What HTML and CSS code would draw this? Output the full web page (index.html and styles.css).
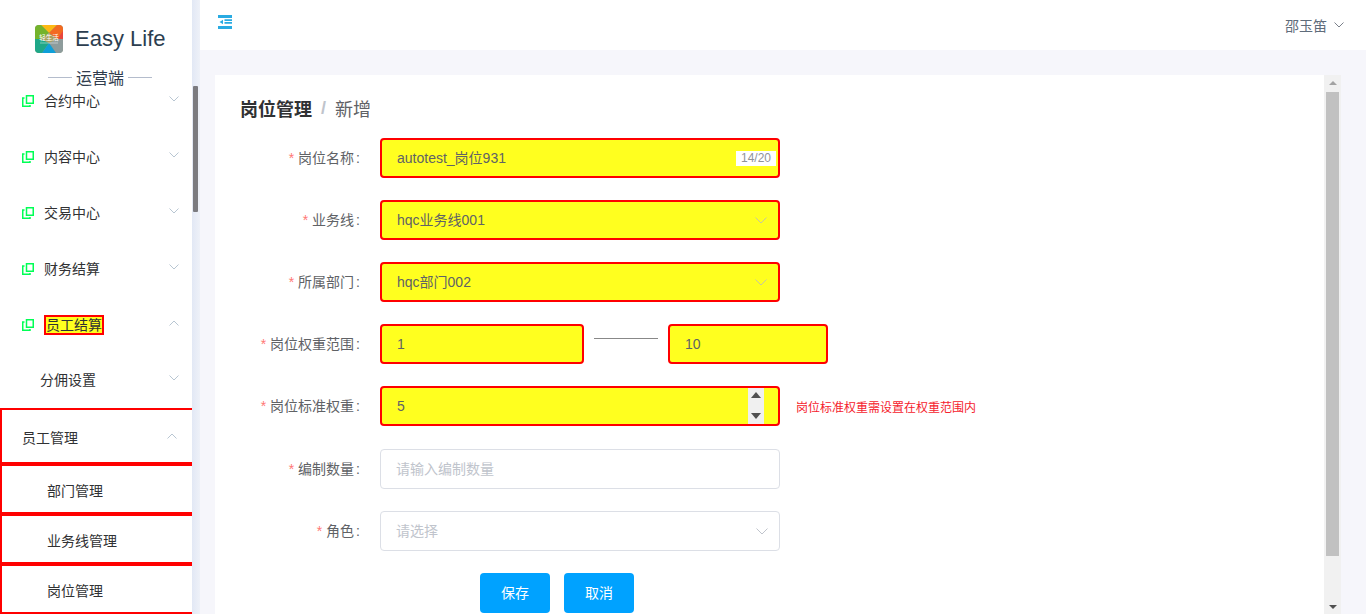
FILE: index.html
```html
<!DOCTYPE html>
<html lang="zh-CN">
<head>
<meta charset="utf-8">
<title>岗位管理</title>
<link rel="stylesheet" href="styles.css">
</head>
<body>
<div class="app">
  <aside class="sidebar">
    <div class="brand">
      <div class="brand-row">
        <svg class="logo" width="28" height="28" viewBox="0 0 28 28">
          <defs><clipPath id="lc"><rect width="28" height="28" rx="4"/></clipPath></defs>
          <g clip-path="url(#lc)">
            <rect width="28" height="28" fill="#8a9a80"/>
            <polygon points="6,0 22,0 14,8" fill="#fdb913"/>
            <polygon points="0,0 6,0 14,8 6,14 0,14" fill="#74b32c"/>
            <polygon points="22,0 28,0 28,14 22,14 14,8" fill="#f26a21"/>
            <polygon points="28,6 28,16 23,13" fill="#e8453c"/>
            <polygon points="0,14 0,28 7,28 14,18 6,14" fill="#1fa888"/>
            <polygon points="28,14 28,28 21,28 14,18 22,14" fill="#8e9c9c"/>
            <polygon points="7,28 14,18 21,28" fill="#0f9fd8"/>
            <polygon points="6,14 14,8 22,14 14,18" fill="#a8a060"/>
            <text x="14" y="15" class="logo-text">轻生活</text>
            <rect class="logo-line" x="5" y="17.500" width="18" height="1"/>
          </g>
        </svg>
        <span class="brand-name">Easy Life</span>
      </div>
      <div class="brand-sub"><i></i><span>运营端</span><i></i></div>
    </div>
    <nav class="menu">
      <div class="menu-item"><svg class="copy" viewBox="0 0 12 12"><path d="M4.500.75h6.750v7.500H4.500zM2.500 3H.75v8.250H8V10"/></svg><span class="menu-text">合约中心</span><svg class="chev" viewBox="0 0 10 6"><path d="M.5.5 5 5 9.500.5"/></svg></div>
      <div class="menu-item"><svg class="copy" viewBox="0 0 12 12"><path d="M4.500.75h6.750v7.500H4.500zM2.500 3H.75v8.250H8V10"/></svg><span class="menu-text">内容中心</span><svg class="chev" viewBox="0 0 10 6"><path d="M.5.5 5 5 9.500.5"/></svg></div>
      <div class="menu-item"><svg class="copy" viewBox="0 0 12 12"><path d="M4.500.75h6.750v7.500H4.500zM2.500 3H.75v8.250H8V10"/></svg><span class="menu-text">交易中心</span><svg class="chev" viewBox="0 0 10 6"><path d="M.5.5 5 5 9.500.5"/></svg></div>
      <div class="menu-item"><svg class="copy" viewBox="0 0 12 12"><path d="M4.500.75h6.750v7.500H4.500zM2.500 3H.75v8.250H8V10"/></svg><span class="menu-text">财务结算</span><svg class="chev" viewBox="0 0 10 6"><path d="M.5.5 5 5 9.500.5"/></svg></div>
      <div class="menu-item"><svg class="copy" viewBox="0 0 12 12"><path d="M4.500.75h6.750v7.500H4.500zM2.500 3H.75v8.250H8V10"/></svg><span class="menu-text marked">员工结算</span><svg class="chev" viewBox="0 0 10 6"><path d="M.5 5.500 5 1l4.500 4.500"/></svg></div>
      <div class="menu-item sub"><span class="menu-text">分佣设置</span><svg class="chev" viewBox="0 0 10 6"><path d="M.5.5 5 5 9.500.5"/></svg></div>
      <div class="boxed head"><span class="menu-text">员工管理</span><svg class="chev" viewBox="0 0 10 6"><path d="M.5 5.500 5 1l4.500 4.500"/></svg></div>
      <div class="boxed leaf"><span class="menu-text">部门管理</span></div>
      <div class="boxed leaf"><span class="menu-text">业务线管理</span></div>
      <div class="boxed leaf"><span class="menu-text">岗位管理</span></div>
    </nav>
  </aside>
  <div class="rail"><div class="rail-thumb"></div></div>
  <div class="main">
    <header class="topbar">
      <svg class="fold" width="14" height="14" viewBox="0 0 14 14"><path d="M0 0h14v3H0zM0 11h14v3H0zM6.500 4.200H14V6H6.500zM6.500 7h7.500v1.800H6.500zM5 4.800v4.400L1.500 7z"/></svg>
      <div class="user"><span>邵玉笛</span><svg class="user-chev" viewBox="0 0 10 6"><path d="M.5.5 5 5 9.500.5"/></svg></div>
    </header>
    <div class="content">
      <section class="card">
        <div class="crumbs"><strong>岗位管理</strong><span class="sep">/</span><span class="crumb">新增</span></div>
        <div class="form">
          <div class="row">
            <label class="label"><em>*</em>岗位名称<span class="colon">:</span></label>
            <div class="field hl wide"><span>autotest_岗位931</span><span class="count">14/20</span></div>
          </div>
          <div class="row">
            <label class="label"><em>*</em>业务线<span class="colon">:</span></label>
            <div class="field hl wide"><span>hqc业务线001</span><svg class="arrow" viewBox="0 0 12 7"><path d="M.5.500 6 6l5.500-5.500"/></svg></div>
          </div>
          <div class="row">
            <label class="label"><em>*</em>所属部门<span class="colon">:</span></label>
            <div class="field hl wide"><span>hqc部门002</span><svg class="arrow" viewBox="0 0 12 7"><path d="M.5.500 6 6l5.500-5.500"/></svg></div>
          </div>
          <div class="row">
            <label class="label"><em>*</em>岗位权重范围<span class="colon">:</span></label>
            <div class="field hl min"><span class="num">1</span></div>
            <div class="dash"></div>
            <div class="field hl max"><span class="num">10</span></div>
          </div>
          <div class="row">
            <label class="label"><em>*</em>岗位标准权重<span class="colon">:</span></label>
            <div class="field hl wide"><span class="num">5</span><div class="spin"><b class="up"></b><b class="down"></b></div></div>
            <span class="hint">岗位标准权重需设置在权重范围内</span>
          </div>
          <div class="row lower">
            <label class="label"><em>*</em>编制数量<span class="colon">:</span></label>
            <div class="field wide ph"><span>请输入编制数量</span></div>
          </div>
          <div class="row">
            <label class="label"><em>*</em>角色<span class="colon">:</span></label>
            <div class="field wide ph"><span>请选择</span><svg class="arrow" viewBox="0 0 12 7"><path d="M.5.500 6 6l5.500-5.500"/></svg></div>
          </div>
          <div class="actions">
            <button class="btn" type="button">保存</button>
            <button class="btn" type="button">取消</button>
          </div>
        </div>
      </section>
      <div class="vbar">
        <b class="vbar-up"></b>
        <div class="vbar-thumb"></div>
        <b class="vbar-down"></b>
      </div>
    </div>
  </div>
</div>
</body>
</html>
```

FILE: styles.css
```css
* { box-sizing: border-box; }
html, body { margin: 0; height: 100%; overflow: hidden; }
body {
  font-family: "Liberation Sans", "Noto Sans CJK SC", sans-serif;
  font-size: 14px;
  color: #303133;
  background: #f6f6fb;
}
.app { display: flex; width: 1366px; height: 614px; overflow: hidden; }

/* sidebar */
.sidebar { flex: 0 0 192px; background: #fff; overflow: hidden; }
.brand { height: 73px; padding-top: 25px; }
.brand-row { display: flex; align-items: center; padding-left: 35px; height: 28px; gap: 12px; }
.logo { flex: none; }
.logo-text { font-size: 6.500px; fill: #fff; text-anchor: middle; }
.logo-line { fill: #fff; opacity: .45; }
.brand-name { font-size: 22px; color: #2c3e50; }
.brand-sub {
  display: flex; align-items: center; justify-content: center; gap: 4px;
  height: 24px; margin-top: 12px; padding-left: 8px;
  font-size: 16px; color: #303c4d; position: relative; z-index: 1;
}
.brand-sub i { width: 24px; height: 1px; background: #b4bccc; }
.menu-item { display: flex; align-items: center; height: 56px; padding: 0 13px 0 22px; }
.menu-item.sub { height: 55px; padding-left: 40px; padding-bottom: 1px; }
.menu-text { font-size: 14px; line-height: 20px; color: #303133; white-space: nowrap; }
.copy { width: 12px; height: 12px; margin-right: 10px; fill: none; stroke: #00ff55; stroke-width: 1.500; flex: none; }
.chev { width: 10px; height: 6px; margin: -4px 0 0 auto; fill: none; stroke: #b8c6d2; stroke-width: 1; flex: none; }
.marked { background: #ffff1f; border: 2px solid #f00; line-height: 16px; }
.boxed { display: flex; align-items: center; border: 2px solid #f00; border-right: 0; width: 192px; }
.head { height: 56px; padding: 4px 15px 0 20px; }
.head .chev { margin-top: -4px; }
.leaf { height: 50px; padding: 4px 0 0 45px; }

/* scroll rail */
.rail { flex: 0 0 8px; background: linear-gradient(90deg, #e2e8f5, #eef1f8); padding: 86px 2px 0 1px; }
.rail-thumb { height: 126px; background: #7b7b80; border-radius: 1px; }

/* main */
.main { flex: 1; min-width: 0; display: flex; flex-direction: column; }
.topbar { flex: 0 0 50px; background: #fff; display: flex; justify-content: space-between; padding: 15px 22px 0 18px; }
.fold { fill: #29abe2; flex: none; }
.user { display: flex; align-items: center; height: 20px; color: #5f6c7b; font-size: 14px; gap: 7px; }
.user-chev { width: 10px; height: 6px; fill: none; stroke: #7a808a; stroke-width: 1; }
.content { flex: 1; min-height: 0; display: flex; padding: 25px 25px 0 15px; }
.card { flex: 1; background: #fff; padding: 21px 0 0 25px; overflow: hidden; }
.crumbs { display: flex; align-items: center; height: 24px; font-size: 18px; }
.crumbs strong { font-weight: 700; color: #303133; }
.sep { margin: 0 9px 0 9px; color: #c0c4cc; font-weight: 700; }
.crumb { color: #606266; }
.form { margin-top: 18px; display: flex; flex-direction: column; gap: 22px; }
.row { display: flex; align-items: center; height: 40px; }
.row.lower { margin-top: 1px; }
.label { flex: 0 0 120px; margin: 0 20px 2px 0; text-align: right; color: #606266; font-size: 14px; }
.label em { font-style: normal; color: #ff7875; margin-right: 4px; }
.colon { margin-left: 2px; }
.field {
  position: relative; display: flex; align-items: center; justify-content: space-between;
  height: 40px; padding: 0 15px; border: 1px solid #dcdfe6; border-radius: 4px;
  color: #606266; font-size: 14px; background: #fff;
}
.field > span { margin-bottom: 2px; }
.field > .num { margin-bottom: 0; }
.field.hl { background: #ffff1f; border: 2px solid #f00; }
.wide { width: 400px; }
.min { width: 204px; }
.max { width: 160px; }
.ph { color: #c0c4cc; }
.field > .count { position: absolute; right: 2px; top: 11px; height: 15px; width: 40px; margin: 0; line-height: 15px; text-align: center; background: #fff; color: #909399; font-size: 12px; }
.arrow { width: 12px; height: 7px; fill: none; stroke: #c0c4cc; stroke-width: 1; flex: none; margin-right: -4px; }
.hl .arrow { stroke: #c6c6a0; }
.dash { width: 64px; height: 1px; margin: -12px 10px 0; background: #888; }
.spin {
  position: absolute; right: 14px; top: 0; bottom: 0; width: 16px; background: #f0f0f0;
  display: flex; flex-direction: column; justify-content: space-between; align-items: center; padding: 4px 0 5px;
}
.up, .vbar-up { width: 0; height: 0; border: solid transparent; border-width: 0 5.500px 6px; border-bottom-color: #505050; }
.down, .vbar-down { width: 0; height: 0; border: solid transparent; border-width: 6px 5.500px 0; border-top-color: #505050; }
.hint { margin-left: 16px; font-size: 12px; color: #f5222d; white-space: nowrap; }
.actions { display: flex; gap: 14px; padding-left: 240px; }
.btn { width: 70px; height: 40px; border: 0; border-radius: 4px; background: #00a2ff; color: #fff; font: inherit; font-size: 14px; padding: 0 0 2px; }

/* card scrollbar */
.vbar { flex: 0 0 17px; background: #f1f1f1; display: flex; flex-direction: column; align-items: center; padding: 6px 0 5px; }
.vbar-up { border-bottom-color: #a3a3a3; border-width: 0 4px 4px; }
.vbar-down { border-top-color: #505050; border-width: 4px 4px 0; margin-top: auto; }
.vbar-thumb { width: 13px; height: 464px; margin-top: 7px; background: #c1c1c1; }
```
